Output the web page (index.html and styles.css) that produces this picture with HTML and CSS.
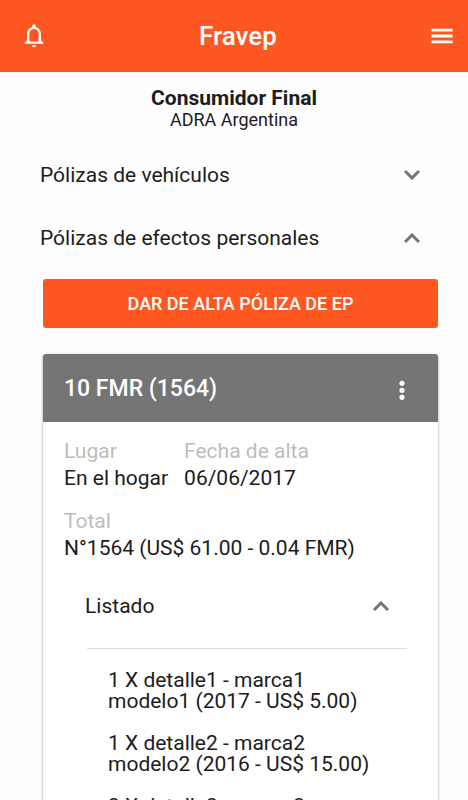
FILE: index.html
```html
<!DOCTYPE html>
<html lang="es">

<head>
    <meta charset="UTF-8">
    <meta name="viewport" content="width=device-width, initial-scale=1.0">
    <title>Fravep</title>
    <link rel="stylesheet" href="styles.css">
</head>

<body>
    <header class="toolbar">
        <button type="button" class="icon-button" aria-label="Notificaciones">
            <svg class="icon" viewBox="0 0 24 24">
                <path d="M12 21.500c1 0 1.800-.7 1.800-1.600h-3.600c0 .9.8 1.600 1.800 1.600zm6-5.800v-5.200c0-3.070-1.630-5.640-4.500-6.320V3.500c0-.83-.67-1.500-1.500-1.500s-1.500.67-1.500 1.500v.68C7.640 4.860 6 7.420 6 10.500v5.200l-2 2v1h16v-1l-2-2zm-2 1H8v-6.200c0-2.480 1.510-4.500 4-4.500s4 2.020 4 4.500v6.200z" />
            </svg>
        </button>
        <h1 class="toolbar-title">Fravep</h1>
        <button type="button" class="icon-button" aria-label="Menú">
            <svg class="icon" viewBox="0 0 24 24">
                <path d="M3 18.200h18v-2.400H3v2.400zm0-5h18v-2.400H3v2.400zm0-7.400v2.400h18V5.800H3z" />
            </svg>
        </button>
    </header>

    <main>
        <div class="customer">
            <h2 class="customer-name">Consumidor Final</h2>
            <p class="customer-org">ADRA Argentina</p>
        </div>

        <button type="button" class="panel-header" aria-expanded="false">
            <span>Pólizas de vehículos</span>
            <svg class="chevron" viewBox="0 0 16 10">
                <path d="M1 1l7 7 7-7" />
            </svg>
        </button>
        <button type="button" class="panel-header" aria-expanded="true" aria-controls="efectos">
            <span>Pólizas de efectos personales</span>
            <svg class="chevron" viewBox="0 0 16 10">
                <path d="M1 1l7 7 7-7" />
            </svg>
        </button>

        <div class="panel-body" id="efectos">
            <button type="button" class="raised-button">DAR DE ALTA PÓLIZA DE EP</button>

            <section class="card">
                <div class="card-header">
                    <h3 class="card-title">10 FMR (1564)</h3>
                    <button type="button" class="icon-button" aria-label="Opciones">
                        <svg class="icon" viewBox="0 0 24 24">
                            <circle cx="12" cy="8" r="2.200" />
                            <circle cx="12" cy="14" r="2.200" />
                            <circle cx="12" cy="20" r="2.200" />
                        </svg>
                    </button>
                </div>
                <dl class="fields">
                    <div>
                        <dt>Lugar</dt>
                        <dd>En el hogar</dd>
                    </div>
                    <div>
                        <dt>Fecha de alta</dt>
                        <dd>06/06/2017</dd>
                    </div>
                    <div>
                        <dt>Total</dt>
                        <dd>N°1564 (US$ 61.00 - 0.04 FMR)</dd>
                    </div>
                </dl>
                <button type="button" class="panel-header list-header" aria-expanded="true" aria-controls="listado">
                    <span>Listado</span>
                    <svg class="chevron" viewBox="0 0 16 10">
                        <path d="M1 1l7 7 7-7" />
                    </svg>
                </button>
                <ul class="items" id="listado">
                    <li>1 X detalle1 - marca1<br>modelo1 (2017 - US$ 5.00)</li>
                    <li>1 X detalle2 - marca2<br>modelo2 (2016 - US$ 15.00)</li>
                    <li>3 X detalle3 - marca3</li>
                </ul>
            </section>
        </div>
    </main>

    <script>
        // Open and close each panel from its header
        document.querySelectorAll('.panel-header').forEach((header) => {
            header.addEventListener('click', () => {
                const open = header.getAttribute('aria-expanded') === 'true';
                header.setAttribute('aria-expanded', String(!open));
                const body = document.getElementById(header.getAttribute('aria-controls'));
                if (body) {
                    body.hidden = open;
                }
            });
        });
    </script>
</body>

</html>
```
FILE: styles.css
```css
* {
    box-sizing: border-box;
}

body {
    margin: 0;
    font-family: Roboto, sans-serif;
    font-size: 21px;
    color: #1c1c1c;
    background-color: #fefefe;
}

h1,
h2,
h3,
p,
dl,
dd,
ul {
    margin: 0;
    padding: 0;
}

button {
    border: 0;
    padding: 0;
    font-family: inherit;
    cursor: pointer;
}

[hidden] {
    display: none !important;
}

.toolbar {
    display: flex;
    align-items: center;
    justify-content: space-between;
    height: 72px;
    padding: 0 12px 0 20px;
    color: #fff;
    background-color: #ff5722;
}

.toolbar-title {
    font-size: 26px;
    font-weight: 500;
}

.icon-button {
    display: flex;
    color: inherit;
    background: none;
}

.icon {
    width: 28px;
    height: 28px;
    fill: currentColor;
}

.customer {
    padding: 16px 0 13px;
    line-height: 21px;
    text-align: center;
}

.customer-name {
    font-size: 21px;
    font-weight: 700;
}

.customer-org {
    font-size: 18px;
}

.panel-header {
    display: flex;
    align-items: center;
    justify-content: space-between;
    width: 100%;
    height: 63px;
    padding: 0 48px 0 40px;
    font-size: 21px;
    color: inherit;
    background: none;
}

.chevron {
    width: 16px;
    height: 10px;
    fill: none;
    stroke: #757575;
    stroke-width: 3;
}

[aria-expanded="true"] .chevron {
    transform: rotate(180deg);
}

.panel-body {
    padding: 10px 30px 30px 43px;
}

.raised-button {
    width: 100%;
    height: 49px;
    border-radius: 3px;
    font-size: 18px;
    font-weight: 500;
    color: #fff;
    background-color: #ff5722;
}

.card {
    margin-top: 26px;
    border-radius: 3px;
    background-color: #fff;
    box-shadow: 0 1px 3px rgba(0, 0, 0, 0.4);
    overflow: hidden;
}

.card-header {
    display: flex;
    align-items: center;
    justify-content: space-between;
    height: 68px;
    padding: 0 22px 0 21px;
    color: #fff;
    background-color: #757575;
}

.card-title {
    font-size: 23px;
    font-weight: 500;
}

.fields {
    display: flex;
    flex-wrap: wrap;
    gap: 16px;
    padding: 16px 21px 2px;
    line-height: 27px;
}

.fields dt {
    color: #bdbdbd;
}

.list-header {
    height: 84px;
    padding: 0 49px 0 42px;
}

.items {
    display: flex;
    flex-direction: column;
    gap: 21px;
    margin: 0 31px 0 44px;
    padding: 21px;
    border-top: 1px solid #dcdcdc;
    line-height: 21px;
    list-style: none;
}
```
